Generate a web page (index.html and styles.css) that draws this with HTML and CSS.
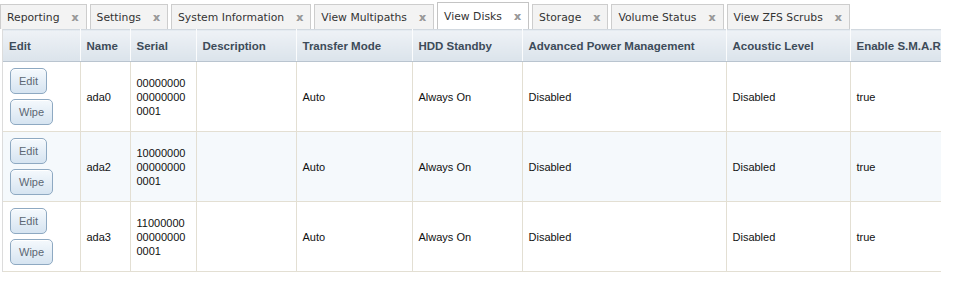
FILE: index.html
```html
<!DOCTYPE html>
<html lang="en">
<head>
  <meta charset="UTF-8">
  <title>View Disks</title>
  <link rel="stylesheet" href="styles.css">
</head>
<body>

  <!-- 탭 영역 -->
  <nav class="tab_bar">
    <div class="tab"><span>Reporting</span><b class="tab_close">x</b></div>
    <div class="tab"><span>Settings</span><b class="tab_close">x</b></div>
    <div class="tab"><span>System Information</span><b class="tab_close">x</b></div>
    <div class="tab"><span>View Multipaths</span><b class="tab_close">x</b></div>
    <div class="tab active"><span>View Disks</span><b class="tab_close">x</b></div>
    <div class="tab"><span>Storage</span><b class="tab_close">x</b></div>
    <div class="tab"><span>Volume Status</span><b class="tab_close">x</b></div>
    <div class="tab"><span>View ZFS Scrubs</span><b class="tab_close">x</b></div>
  </nav>

  <!-- 디스크 그리드 -->
  <div class="grid_wrap">
    <table class="grid">
      <colgroup>
        <col style="width:77px">
        <col style="width:50px">
        <col style="width:66px">
        <col style="width:100px">
        <col style="width:116px">
        <col style="width:110px">
        <col style="width:204px">
        <col style="width:124px">
        <col style="width:150px">
      </colgroup>
      <thead>
        <tr>
          <th>Edit</th>
          <th>Name</th>
          <th>Serial</th>
          <th>Description</th>
          <th>Transfer Mode</th>
          <th>HDD Standby</th>
          <th>Advanced Power Management</th>
          <th>Acoustic Level</th>
          <th>Enable S.M.A.R.T.</th>
        </tr>
      </thead>
      <tbody>
        <tr>
          <td class="btn_cell"><div class="btn_stack"><button class="grid_btn">Edit</button><button class="grid_btn">Wipe</button></div></td>
          <td>ada0</td>
          <td><div class="serial">00000000000000000001</div></td>
          <td></td>
          <td>Auto</td>
          <td>Always On</td>
          <td>Disabled</td>
          <td>Disabled</td>
          <td>true</td>
        </tr>
        <tr class="alt">
          <td class="btn_cell"><div class="btn_stack"><button class="grid_btn">Edit</button><button class="grid_btn">Wipe</button></div></td>
          <td>ada2</td>
          <td><div class="serial">10000000000000000001</div></td>
          <td></td>
          <td>Auto</td>
          <td>Always On</td>
          <td>Disabled</td>
          <td>Disabled</td>
          <td>true</td>
        </tr>
        <tr>
          <td class="btn_cell"><div class="btn_stack"><button class="grid_btn">Edit</button><button class="grid_btn">Wipe</button></div></td>
          <td>ada3</td>
          <td><div class="serial">11000000000000000001</div></td>
          <td></td>
          <td>Auto</td>
          <td>Always On</td>
          <td>Disabled</td>
          <td>Disabled</td>
          <td>true</td>
        </tr>
      </tbody>
    </table>
  </div>

</body>
</html>
```

FILE: styles.css
```css
:root {
    --tab-font: "DejaVu Sans", Verdana, sans-serif;
    --grid-font: "Liberation Sans", Arial, sans-serif;
    --line: #e3dfd3;
    --head-text: #3d4b59;
}

body {margin: 0; background: #fff; font-family: var(--grid-font);}

/* tabs */
.tab_bar {display: flex; align-items: flex-end; gap: 3px; height: 29px; box-sizing: border-box;}
.tab {display: flex; align-items: center; gap: 12px; height: 25px; padding: 0 7px 0 6px; box-sizing: border-box; background: #f3f3f3; border: 1px solid #cdcdcd; border-bottom: none; font-family: var(--tab-font); font-size: 10.8px; color: #333;}
.tab.active {height: 27px; background: #fff; border-color: #c4c4c4;}
.tab_close {font-family: var(--tab-font); font-size: 11px; font-weight: bold; color: #999; line-height: 1; text-shadow: 0 0 0.5px #bbb;}

/* grid */
.grid_wrap {width: 938px; margin-left: 2px; overflow: hidden; border-left: 1px solid #dcdcdc;}
.grid {table-layout: fixed; width: 997px; border-collapse: collapse; font-size: 11px; color: #111;}
.grid th {height: 32px; box-sizing: border-box; padding: 0 6px; text-align: left; font-size: 11.5px; font-weight: bold; color: var(--head-text); white-space: nowrap; overflow: hidden; background: linear-gradient(#eef2f6, #dbe3eb); border-top: 1px solid #d2d9e0; border-bottom: 1px solid #b9c4cf; border-right: 1px solid #fbfcfd;}
.grid td {height: 70px; box-sizing: border-box; padding: 0 6px; vertical-align: middle; border-bottom: 1px solid var(--line); border-right: 1px solid var(--line); white-space: nowrap;}
.grid tr.alt td {background: #f5f9fc;}
.serial {width: 52px; white-space: normal; word-break: break-all; line-height: 14px;}

/* buttons */
.btn_cell {padding-left: 7px !important;}
.btn_stack {display: flex; flex-direction: column; align-items: flex-start; gap: 5px;}
.grid_btn {height: 26px; padding: 0 8px; font-family: var(--grid-font); font-size: 11px; color: #5b6774; background: linear-gradient(#f5f9fd, #d6e4f1); border: 1px solid #8ea9c2; border-radius: 5px; box-shadow: inset 0 1px 0 #fff;}
```
